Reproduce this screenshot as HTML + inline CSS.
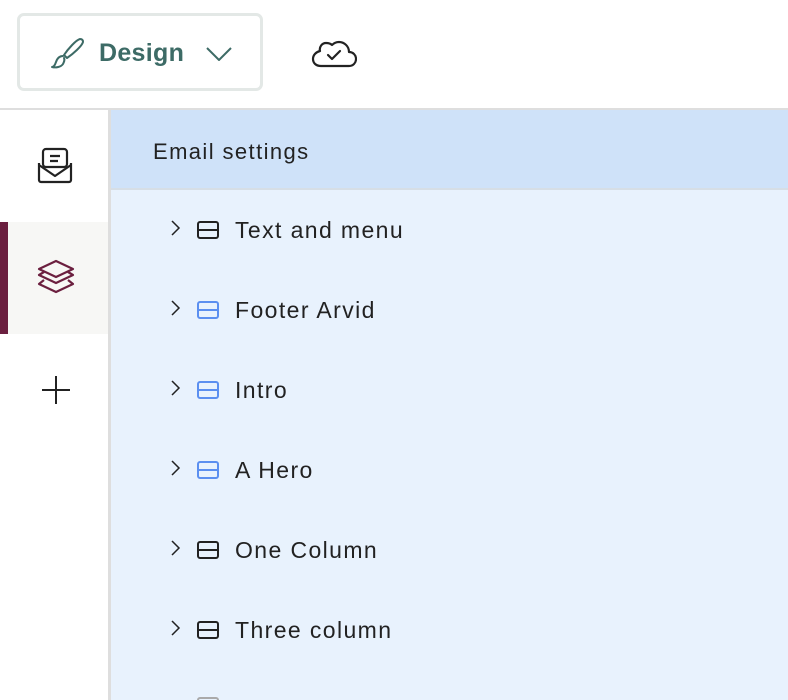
<!DOCTYPE html>
<html style="overflow:hidden;height:700px"><head><style>
body{margin:0;width:788px;height:700px;overflow:hidden;background:#fff;font-family:"Liberation Sans",sans-serif;position:relative}
.top{position:absolute;left:0;top:0;width:788px;height:108px;border-bottom:2px solid #dedede;background:#fff}
.btn{position:absolute;left:17px;top:13px;width:240px;height:72px;border:3px solid #e3e8e6;border-radius:7px}
.btn span{position:absolute;left:79px;top:23px;font-size:25px;font-weight:bold;color:#3d6b66;letter-spacing:.3px}
.side{position:absolute;left:0;top:110px;width:108px;height:590px;border-right:3px solid #dedede;background:#fff}
.active{position:absolute;left:0;top:222px;width:108px;height:112px;background:#f7f7f5}
.active:before{content:"";position:absolute;left:0;top:0;width:8px;height:112px;background:#6b1f3f}
.hdr{position:absolute;left:111px;top:110px;width:677px;height:78px;background:#cfe2f9;border-bottom:2px solid #d6dee6}
.hdr span{position:absolute;left:42px;top:29px;font-size:22px;letter-spacing:1.4px;color:#222}
.body{position:absolute;left:111px;top:190px;width:677px;height:510px;background:#e8f2fd;overflow:hidden}
.row{position:absolute;left:0;height:30px;width:677px}
.row .t{position:absolute;left:124px;top:1px;font-size:23px;letter-spacing:1.4px;color:#222}
.row svg{position:absolute;top:0}
</style></head><body>
<div class="top">
 <div class="btn">
  <svg style="position:absolute;left:28px;top:21px" width="36" height="34" viewBox="0 0 36 34" fill="none" stroke="#3d6b66" stroke-width="2" stroke-linecap="round" stroke-linejoin="round"><path d="M32 2c-4 1-12 10-16 16l3 3c6-4 15-12 16-16c0-2-1-3-3-3z"/><path d="M15 19c-4 0-6 3-7 6c-1 3-2 5-4 5c4 1 9 0 11-3c1-2 2-4 1-6"/></svg>
  <span>Design</span>
  <svg style="position:absolute;left:186px;top:31px" width="26" height="14" viewBox="0 0 26 14" fill="none" stroke="#3d6b66" stroke-width="2"><path d="M1 1l12 12L25 1"/></svg>
 </div>
 <svg style="position:absolute;left:311px;top:36px" width="46" height="32" viewBox="0 0 46 32" fill="none" stroke="#222" stroke-width="2.2" stroke-linejoin="round"><path d="M10 30h28c4 0 7-3 7-7s-3-7-7-7c0-6-5-10-10-10c-3 0-5 1-7 3c-2-2-4-2-6-2c-4 0-7 4-6 8c-4 1-7 4-7 8s3 7 8 7z"/><path d="M17 19l4 4l8-8" stroke-linecap="round"/></svg>
</div>
<div class="side"></div>
<div class="active"></div>
<svg style="position:absolute;left:37px;top:147px" width="38" height="38" viewBox="0 0 38 38" fill="none" stroke="#222" stroke-width="2.2" stroke-linejoin="round"><rect x="6" y="2" width="24" height="18" rx="3"/><path d="M13 9h10M13 14h8"/><path d="M2 16v17a2 2 0 0 0 2 2h28a2 2 0 0 0 2-2V16"/><path d="M2 18l16 11l16-11"/></svg>
<svg style="position:absolute;left:37px;top:259px" width="38" height="38" viewBox="0 0 38 38" fill="none" stroke="#6b1f3f" stroke-width="2.2" stroke-linejoin="round"><path d="M19 2l17 8l-17 8L2 10z"/><path d="M7 13l-5 3l17 8l17-8l-5-3"/><path d="M7 21l-5 4l17 8l17-8l-5-4"/></svg>
<svg style="position:absolute;left:41px;top:375px" width="30" height="30" viewBox="0 0 30 30" stroke="#222" stroke-width="2"><path d="M15 1v28M1 15h28"/></svg>
<div class="hdr"><span>Email settings</span></div>
<div class="body">
 <div class="row" style="top:26px"><svg style="left:58px;top:3px" width="12" height="18" viewBox="0 0 12 18" fill="none" stroke="#222" stroke-width="1.5"><path d="M3 2l7 7l-7 7"/></svg><svg style="left:86px;top:4px" width="22" height="20" viewBox="0 0 22 20" fill="none" stroke="#222" stroke-width="2"><rect x="1" y="2" width="20" height="16" rx="2"/><path d="M1 10h20"/></svg><span class="t">Text and menu</span></div>
 <div class="row" style="top:106px"><svg style="left:58px;top:3px" width="12" height="18" viewBox="0 0 12 18" fill="none" stroke="#222" stroke-width="1.5"><path d="M3 2l7 7l-7 7"/></svg><svg style="left:86px;top:4px" width="22" height="20" viewBox="0 0 22 20" fill="none" stroke="#5b8ff0" stroke-width="2"><rect x="1" y="2" width="20" height="16" rx="2"/><path d="M1 10h20"/></svg><span class="t">Footer Arvid</span></div>
 <div class="row" style="top:186px"><svg style="left:58px;top:3px" width="12" height="18" viewBox="0 0 12 18" fill="none" stroke="#222" stroke-width="1.5"><path d="M3 2l7 7l-7 7"/></svg><svg style="left:86px;top:4px" width="22" height="20" viewBox="0 0 22 20" fill="none" stroke="#5b8ff0" stroke-width="2"><rect x="1" y="2" width="20" height="16" rx="2"/><path d="M1 10h20"/></svg><span class="t">Intro</span></div>
 <div class="row" style="top:266px"><svg style="left:58px;top:3px" width="12" height="18" viewBox="0 0 12 18" fill="none" stroke="#222" stroke-width="1.5"><path d="M3 2l7 7l-7 7"/></svg><svg style="left:86px;top:4px" width="22" height="20" viewBox="0 0 22 20" fill="none" stroke="#5b8ff0" stroke-width="2"><rect x="1" y="2" width="20" height="16" rx="2"/><path d="M1 10h20"/></svg><span class="t">A Hero</span></div>
 <div class="row" style="top:346px"><svg style="left:58px;top:3px" width="12" height="18" viewBox="0 0 12 18" fill="none" stroke="#222" stroke-width="1.5"><path d="M3 2l7 7l-7 7"/></svg><svg style="left:86px;top:4px" width="22" height="20" viewBox="0 0 22 20" fill="none" stroke="#222" stroke-width="2"><rect x="1" y="2" width="20" height="16" rx="2"/><path d="M1 10h20"/></svg><span class="t">One Column</span></div>
 <div class="row" style="top:426px"><svg style="left:58px;top:3px" width="12" height="18" viewBox="0 0 12 18" fill="none" stroke="#222" stroke-width="1.5"><path d="M3 2l7 7l-7 7"/></svg><svg style="left:86px;top:4px" width="22" height="20" viewBox="0 0 22 20" fill="none" stroke="#222" stroke-width="2"><rect x="1" y="2" width="20" height="16" rx="2"/><path d="M1 10h20"/></svg><span class="t">Three column</span></div>
 <div class="row" style="top:504px"><svg style="left:86px;top:2px" width="22" height="20" viewBox="0 0 22 20" fill="none" stroke="#aaa" stroke-width="2"><rect x="1" y="2" width="20" height="16" rx="2"/></svg></div>
</div>
</body></html>
